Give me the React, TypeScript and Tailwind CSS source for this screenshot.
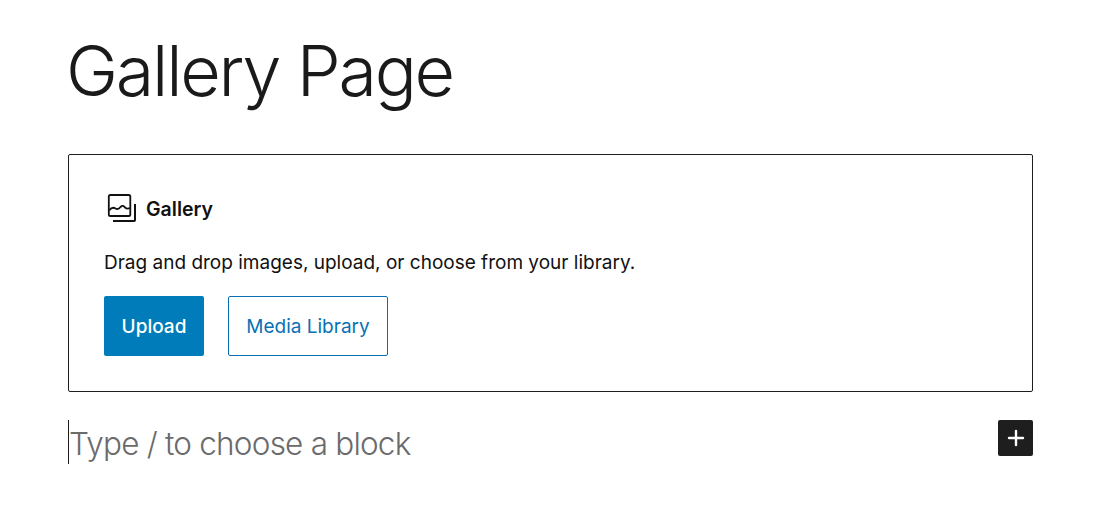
import { Plus } from "lucide-react";

function GalleryIcon() {
  return (
    <svg width="32" height="32" viewBox="0 0 32 32" fill="none" stroke="#111" strokeWidth="1.8">
      <rect x="4.8" y="3" width="21.500" height="21" rx="1.600" />
      <path d="M5 18.500c2.500-3 4.500-3.400 6.500-2 2.500 1.200 3.500.6 5-1.500 2-2 3.500-1.200 4.500.5 1.500 1.300 3 1.500 5 .5" />
      <path d="M9 29h21a1.200 1.200 0 0 0 1-1.200V12" strokeWidth="2" />
    </svg>
  );
}

export default function App() {
  return (
    <div className="w-[1116px] h-[516px] overflow-hidden bg-white pl-[68px] font-['Inter',sans-serif] text-[#111]">
      <h1 className="-ml-[2px] pt-[30px] h-[154px] text-[70px] leading-[82px] font-light tracking-[-0.032em] text-[#1a1a1a]">Gallery Page</h1>

      <div className="w-[965px] h-[238px] border border-[#1e1e1e] rounded-[2px] pl-[35px] pt-[35px]">
        <div className="flex items-center gap-[10px] h-[36px]">
          <GalleryIcon />
          <span className="pt-[3px] text-[19.500px] font-semibold">Gallery</span>
        </div>
        <p className="mt-[24px] text-[19px] leading-[26px]">Drag and drop images, upload, or choose from your library.</p>
        <div className="mt-[20px] flex gap-[24px]">
          <button className="w-[100px] h-[60px] pt-[3px] rounded-[2px] bg-[#007cba] text-white text-[19px] font-medium">Upload</button>
          <button className="w-[160px] h-[60px] pt-[3px] rounded-[2px] border-[1.500px] border-[#0a70b5] bg-white text-[#0a70b5] text-[19px]">Media Library</button>
        </div>
      </div>

      <div className="mt-[28px] w-[965px] flex items-start justify-between h-[44px]">
        <div className="border-l border-[#1e1e1e] h-[44px] pt-[3px] flex items-center text-[31.500px] font-light tracking-[-0.025em] text-[#6b6b6b]">Type / to choose a block</div>
        <div className="w-[35px] h-[36px] rounded-[2px] bg-[#1e1e1e] flex items-center justify-center">
          <Plus className="text-white" size={24} strokeWidth={2.400} />
        </div>
      </div>
    </div>
  );
}
